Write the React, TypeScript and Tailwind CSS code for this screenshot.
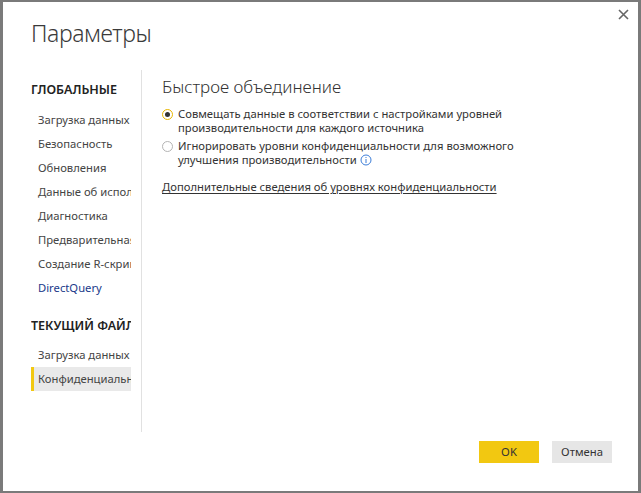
import React from "react";

const font = { fontFamily: '"Noto Sans", "Open Sans", sans-serif' };

function Radio({ checked }: { checked: boolean }) {
  return checked ? (
    <span className="mt-[2px] flex h-[11px] w-[11px] shrink-0 items-center justify-center rounded-full border border-[#e8b600] bg-white">
      <span className="h-[5px] w-[5px] rounded-full bg-[#333]" />
    </span>
  ) : (
    <span className="mt-[2px] h-[11px] w-[11px] shrink-0 rounded-full border border-[#b4b4b4] bg-white" />
  );
}

const globalItems = [
  "Загрузка данных",
  "Безопасность",
  "Обновления",
  "Данные об использовании",
  "Диагностика",
  "Предварительная версия",
  "Создание R-скриптов",
  "DirectQuery",
];

export default function App() {
  return (
    <div
      className="h-[493px] w-[641px] bg-[#7a7a7a] pb-[2px] pl-[3px] pr-[3px] pt-[2px]"
      style={font}
    >
      <div className="relative flex h-full w-full flex-col bg-white text-[#333]">
        <button className="absolute right-[8px] top-[5px] flex h-[14px] w-[14px] items-center justify-center">
          <svg width="11" height="11" viewBox="0 0 11 11">
            <path d="M1 1L10 10M10 1L1 10" stroke="#666" strokeWidth="1.6" />
          </svg>
        </button>
        <div className="h-[68px] pl-[28px] pt-[16px]">
          <h1 className="text-[23px] font-light leading-[30px] tracking-[-0.4px] text-[#3a3a3a]">Параметры</h1>
        </div>
        <div className="flex h-[362px]">
          <div className="w-[138px] shrink-0 pl-[28px] pr-[10px]">
            <div className="mt-[11px] overflow-hidden whitespace-nowrap text-[12.5px] font-semibold leading-[18px] text-[#222]">
              ГЛОБАЛЬНЫЕ
            </div>
            <div className="mt-[9px] flex flex-col">
              {globalItems.map((t) => (
                <div
                  key={t}
                  className={
                    "h-[24px] overflow-hidden whitespace-nowrap pl-[7px] text-[11.25px] leading-[24px] " +
                    (t === "DirectQuery" ? "text-[#1a3a8a]" : "text-[#444]")
                  }
                >
                  {t}
                </div>
              ))}
            </div>
            <div className="mt-[17px] overflow-hidden whitespace-nowrap text-[12.5px] font-semibold leading-[18px] text-[#222]">
              ТЕКУЩИЙ ФАЙЛ
            </div>
            <div className="mt-[8px] flex flex-col">
              <div className="h-[24px] overflow-hidden whitespace-nowrap pl-[7px] text-[11.25px] leading-[24px] text-[#444]">
                Загрузка данных
              </div>
              <div className="h-[24px] overflow-hidden whitespace-nowrap border-l-[3px] border-[#f2c811] bg-[#e9e9e9] pl-[4px] text-[11.25px] leading-[24px] text-[#444]">
                Конфиденциальность
              </div>
            </div>
          </div>
          <div className="w-px shrink-0 bg-[#e1e1e1]" />
          <div className="flex-1 pl-[20px] pr-[20px]">
            <div className="mt-[4px] text-[17px] font-light leading-[26px] text-[#333]">
              Быстрое объединение
            </div>
            <div className="mt-[7px] flex gap-[5px] text-[11.25px] leading-[14px] text-[#333]">
              <Radio checked />
              <div>
                Совмещать данные в соответствии с настройками уровней
                <br />
                производительности для каждого источника
              </div>
            </div>
            <div className="mt-[4px] flex gap-[5px] text-[11.25px] leading-[14px] text-[#333]">
              <Radio checked={false} />
              <div>
                Игнорировать уровни конфиденциальности для возможного
                <br />
                улучшения производительности{" "}
                <svg className="inline-block align-[-2px]" width="12" height="12" viewBox="0 0 12 12">
                  <circle cx="6" cy="6" r="5" fill="none" stroke="#3b7dd8" strokeWidth="1" />
                  <rect x="5.5" y="5" width="1" height="4" fill="#3b7dd8" />
                  <rect x="5.5" y="3" width="1" height="1" fill="#3b7dd8" />
                </svg>
              </div>
            </div>
            <div className="mt-[13px] text-[11.25px] leading-[14px] text-[#333] underline underline-offset-2">
              Дополнительные сведения об уровнях конфиденциальности
            </div>
          </div>
        </div>
        <div className="flex flex-1 items-start justify-end gap-[13px] pr-[26px] pt-[9px]">
          <button className="h-[22px] w-[60px] bg-[#f2c811] text-[11.25px] text-[#333]">OK</button>
          <button className="h-[22px] w-[60px] bg-[#e6e6e6] text-[11.25px] text-[#333]">Отмена</button>
        </div>
      </div>
    </div>
  );
}
